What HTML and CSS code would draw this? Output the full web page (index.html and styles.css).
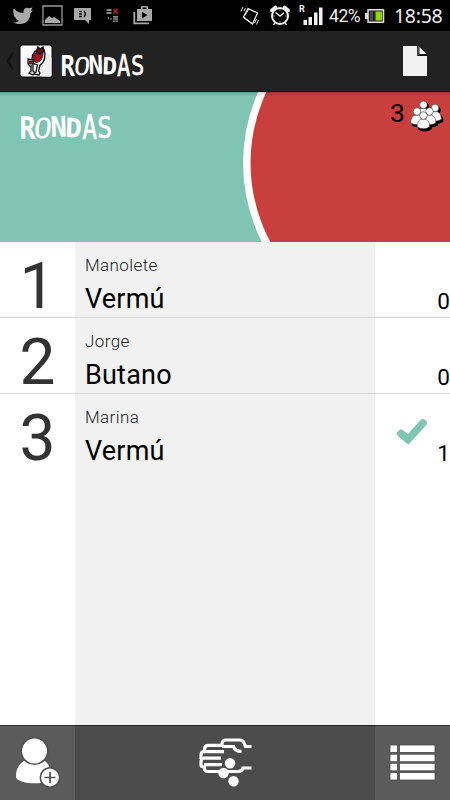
FILE: index.html
```html
<!DOCTYPE html>
<html lang="es">
<head>
    <meta charset="UTF-8">
    <meta name="viewport" content="width=device-width, initial-scale=1.0">
    <title>Rondas</title>
    <link rel="stylesheet" href="styles.css">
</head>
<body>
    <div class="app">
        <div class="status-bar">
            <svg class="status-left" width="160" height="31" viewBox="0 0 160 31" fill="#a9a9a9">
                <path d="M14 8.500C17 12 20 13 23.500 13C23 9 26 6.500 29 8.200L32.500 7.500L31 10.500L33 10.500L30.500 13C30.500 21 23 27 13.500 22.500C16 22.500 18 22 19 20.500C17 20.500 15.500 19 15.500 17.500C13.800 16.500 13.500 15 13.800 13.500C12.800 12 13 10 14 8.500Z"/>
                <path d="M43 6h19v19h-19z" fill="none" stroke="#999" stroke-width="1.300"/>
                <path d="M45 23v-3l4-4 3 2 2-1 6 4v2z"/>
                <path d="M74 8h17v12h-2v4l-4-4H74z"/>
                <path d="M79 11.500h3M79 14h3M79 16.500h3M84 11q2.500 3 0 6" stroke="#111" fill="none" stroke-width="1.500"/>
                <path d="M106.500 9h5v2h-5zM106.500 12h5v2h-5zM108 17h1v2h-1zM110.500 18h1v2h-1zM113 16h5v1.700h-5zM113 18.300h5v1.500h-5zM113 20.500h5v1.300h-5z" fill="#888"/>
                <path d="M113.500 9l4 4.500m0-4.500l-4 4.500" stroke="#b51618" stroke-width="1.500"/>
                <path d="M137 9h4V7q0-1 1-1h5q1 0 1 1v2h4v12h-15zM142.500 7.500V9h4V7.500z" fill-rule="evenodd"/>
                <path d="M142 12l5.500 3-5.500 3.500z" fill="#000"/>
                <path d="M134.300 12v11.300h14.500" fill="none" stroke="#a9a9a9" stroke-width="1.800"/>
            </svg>
            <div class="status-right">
                <svg width="86" height="31" viewBox="238 0 86 31" fill="none" stroke="#eee">
                    <path d="M248 8.500l9.500 4.500-5 11-9-7z" stroke-width="1.300"/>
                    <path d="M245 15.500l4-6.500M244 18l8 5.500" stroke-width=".8"/>
                    <path d="M243 7l-2 4.500M245.500 8l-1.500 3M258.500 20l-2 4.500M256.500 19l-2 4" stroke-width="1"/>
                    <circle cx="280" cy="16" r="8" stroke-width="2"/>
                    <path d="M275.500 12.500l4.500 3.500 4-3.200M273.500 25l1.500-2.500M286.500 25l-1.500-2.500" stroke-width="1.400"/>
                    <path d="M271.500 10.500l4-3.500M288.500 10.500l-4-3.500" stroke-width="3" stroke-linecap="round"/>
                    <path d="M280 9.500v1M280 21.500v1M273.500 16h1M285.500 16h1" stroke-width="1"/>
                    <path d="M303.500 20h3.500v5h-3.500zM308.500 17h3.500v8h-3.500zM314 12.500h3.500V25h-3.500zM319 7.500h3.500V25h-3.500z" fill="#f0f0f0" stroke="none"/>
                    <text class="roaming" x="299" y="12">R</text>
                </svg>
                <span class="battery-level">42%</span>
                <svg class="battery" width="20" height="31" viewBox="0 0 20 31">
                    <path d="M3 9.800h15.500v12.400H3z" fill="#222" stroke="#ddd" stroke-width="1.500"/>
                    <path d="M0 13h3v6H0z" fill="#ddd"/>
                    <path d="M10.500 11.500h6.500v9h-6.500z" fill="#8fd413"/>
                    <path d="M5 11.500h3v9H5z" fill="#484848"/>
                </svg>
                <span class="clock">18:58</span>
            </div>
        </div>

        <header class="action-bar">
            <svg class="back" width="10" height="20" viewBox="0 0 10 20"><path d="M8 1.500L3 10l5 8.500" fill="none" stroke="#141414" stroke-width="2.500"/></svg>
            <svg class="app-icon" width="34" height="34" viewBox="0 0 34 34">
                <rect x=".5" y=".5" width="33" height="33" rx="3" fill="#0b0b0b"/>
                <rect x="1.500" y="1.500" width="31" height="31" rx="2" fill="#fafafa"/>
                <path d="M25 5l7.500 8v19.500H23l-4-5z" fill="#eee"/>
                <g stroke="#111" stroke-width="1.300">
                    <path d="M16 7C12 12 12 19 16 20L18.500 21L17 28L14 30L20 31L21 29L19.500 27L21 21C26 18 27 11 25 6Z" fill="#fff"/>
                    <path d="M15.500 9C13.500 14 14 18 18 18.500C22 18 24.500 13 24 8L20 10Z" fill="#a5141f" stroke-width=".8"/>
                    <path d="M17 8L19 3L21 5L24 3L25 7L21 10Z" fill="#6b1015"/>
                    <path d="M9 15L9 20Q11 23 12 22L12 27L10 29L14 31L16 29L14 27L14 21L15 16Z" fill="#ddd"/>
                    <path d="M10 17h4v3h-4z" fill="#a01b23" stroke-width=".6"/>
                </g>
            </svg>
            <h1 class="logo logo-small"><span class="l-r">R</span><span class="l-o">O</span><span class="l-n">N</span><span class="l-d">D</span><span class="l-a">A</span><span class="l-s">S</span></h1>
            <svg class="new-doc" width="26" height="32" viewBox="0 0 26 32">
                <path d="M1 1h15.500v9H25v21H1z" fill="#f2f2f2"/>
                <path d="M17.500 2l7 7h-7z" fill="#f2f2f2"/>
                <path d="M15.800 1v9.500H25" fill="none" stroke="#111" stroke-width="1.200"/>
            </svg>
        </header>

        <section class="banner">
            <svg class="banner-circle" width="450" height="150" viewBox="0 0 450 150">
                <circle cx="418.500" cy="71" r="171.700" fill="#c93f3d" stroke="#fff" stroke-width="7.500"/>
            </svg>
            <h2 class="logo"><span class="l-r">R</span><span class="l-o">O</span><span class="l-n">N</span><span class="l-d">D</span><span class="l-a">A</span><span class="l-s">S</span></h2>
            <div class="people">
                <span>3</span>
                <svg width="34" height="33" viewBox="0 0 34 33">
                    <defs>
                        <g id="person">
                            <path d="M-6.300 11.500C-6.500 6 -4 3.500 0 3.500S6.500 6 6.300 11.500Q0 15 -6.300 11.500Z"/>
                            <circle r="3.800"/>
                        </g>
                    </defs>
                    <g transform="translate(1.500 1.700)" fill="#000" stroke="#000">
                        <use href="#person" x="13.400" y="6"/><use href="#person" x="25" y="9.500"/><use href="#person" x="7" y="13"/><use href="#person" x="19.500" y="13"/><use href="#person" x="13.400" y="17"/>
                    </g>
                    <g fill="#fff" stroke="#333" stroke-width=".6">
                        <use href="#person" x="13.400" y="5.800"/><use href="#person" x="25" y="9"/><use href="#person" x="7" y="12.500"/><use href="#person" x="19.500" y="12.500"/><use href="#person" x="13.400" y="16.500"/>
                    </g>
                </svg>
            </div>
        </section>

        <main class="rounds">
            <div class="row">
                <div class="number">1</div>
                <div class="person">
                    <div class="name">Manolete</div>
                    <div class="drink">Vermú</div>
                </div>
                <div class="count">0</div>
            </div>
            <div class="row">
                <div class="number">2</div>
                <div class="person">
                    <div class="name">Jorge</div>
                    <div class="drink">Butano</div>
                </div>
                <div class="count">0</div>
            </div>
            <div class="row">
                <div class="number">3</div>
                <div class="person">
                    <div class="name">Marina</div>
                    <div class="drink">Vermú</div>
                </div>
                <div class="count">
                    <svg class="check" width="32" height="30" viewBox="0 0 32 30"><path d="M5 16.500L12 22.500L27 6" fill="none" stroke="#80c4b3" stroke-width="7.600" stroke-linecap="round"/></svg>
                    1
                </div>
            </div>
        </main>

        <nav class="bottom-bar">
            <a class="tab">
                <svg width="75" height="75" viewBox="0 0 75 75">
                    <path d="M24 36C17 41 16 46 16 52C17 60 49 60 51 54C52 47 50 40 45 36Z" fill="#fff"/>
                    <circle cx="34.500" cy="26" r="13.300" fill="#fff" stroke="#505050" stroke-width="1.600"/>
                    <circle cx="50" cy="52.500" r="9.700" fill="#fff" stroke="#505050" stroke-width="1.600"/>
                    <path d="M50 47v11M44.500 52.500h11" stroke="#505050" stroke-width="1.700"/>
                </svg>
            </a>
            <a class="tab tab-main">
                <svg width="60" height="75" viewBox="195 0 60 75">
                    <g fill="none" stroke="#fff" stroke-width="3.200">
                        <path d="M223 20.300H209Q204.500 20.300 204.500 24V26.500Q201 26.500 201 30V33Q201.500 33.300 203 33.500Q201 34 201 37V40Q201 42 204.500 42V44Q204.500 46.500 208 46.500H238Q242 46.500 243 43H251.500"/>
                        <path d="M204 26.700H224M203 33.200H221M204 39.700H222"/>
                        <path d="M222 20.300V19Q222 15 226 15H240Q243 15 244 18L245.500 21.500H251.500"/>
                        <path d="M222 21.500H233.500Q235 26.500 241.500 26.500"/>
                    </g>
                    <g fill="#fff">
                        <circle cx="230" cy="38.300" r="5.200"/>
                        <circle cx="223.500" cy="48" r="5.200"/>
                        <circle cx="233.500" cy="56.300" r="5.200"/>
                    </g>
                </svg>
            </a>
            <a class="tab">
                <svg width="75" height="75" viewBox="0 0 75 75" fill="#fff" stroke="#474747" stroke-width=".8">
                    <path d="M15 20h7.500v7.500H15zM24.500 20H60v7.500H24.500zM15 29.200h7.500v7.500H15zM24.500 29.200H60v7.500H24.500zM15 38.300h7.500v7.500H15zM24.500 38.300H60v7.500H24.500zM15 47.500h7.500V55H15zM24.500 47.500H60V55H24.500z"/>
                </svg>
            </a>
        </nav>
    </div>
</body>
</html>
```

FILE: styles.css
```css
* { box-sizing: border-box; }
body {
    margin: 0;
    font-family: Roboto, "Liberation Sans", sans-serif;
    color: #000;
}
svg { display: block; flex-shrink: 0; }
.app {
    display: flex;
    flex-direction: column;
    width: 450px;
    height: 800px;
    overflow: hidden;
}

.status-bar {
    display: flex;
    justify-content: space-between;
    height: 31px;
    background: #000;
    color: #f0f0f0;
}
.status-right { display: flex; padding-right: 7px; }
.roaming { font: bold 9px Roboto, sans-serif; fill: #eee; stroke: none; }
.battery-level { width: 38px; padding-left: 5px; font-size: 17.500px; line-height: 33px; letter-spacing: -0.4px; }
.battery { margin-left: 3px; }
.clock { width: 49px; margin-left: 9px; font: 19.500px/32px "Noto Sans", sans-serif; letter-spacing: -0.3px; white-space: nowrap; }

.action-bar {
    display: flex;
    align-items: center;
    height: 61px;
    padding: 0 22px 0 5px;
    background: #222;
    border-bottom: 1px solid #101515;
}
.app-icon { margin-left: 4px; }
.new-doc { margin-left: auto; }

/* hand-cut lettering, every letter has its own weight and tilt */
.logo {
    display: flex;
    margin: 0;
    color: #fff;
    font: bold 29px/30px "DejaVu Sans Mono", monospace;
}
.logo span { width: 15.400px; text-align: center; transform-origin: 50% 55%; }
.logo .l-r { transform: scale(0.92, 1.12); }
.logo .l-o { font-weight: normal; transform: skewX(-6deg) scale(1.05, 0.95); }
.logo .l-n { transform: rotate(-2deg) scale(0.94, 0.98) translateY(-1px); }
.logo .l-d { transform: rotate(2deg) scale(0.95, 0.92); }
.logo .l-a { font-weight: normal; -webkit-text-stroke: 0.5px #fff; transform: scale(0.85, 1.15); }
.logo .l-s { font-weight: normal; -webkit-text-stroke: 0.5px #fff; transform: scale(0.85, 1.05); }
.logo-small { margin: 9px 0 0 7px; font-size: 26px; }
.logo-small span { width: 14px; }

.banner {
    position: relative;
    display: flex;
    justify-content: space-between;
    align-items: flex-start;
    height: 150px;
    padding: 20px 6px 0 19px;
    background: #80c4b3;
}
.banner::after {
    content: "";
    position: absolute;
    inset: 0 0 auto;
    height: 4px;
    background: linear-gradient(rgba(0, 0, 0, 0.2), transparent);
}
.banner-circle { position: absolute; left: 0; top: 0; }
.banner .logo { position: relative; margin-top: 1px; }
.people { position: relative; display: flex; gap: 5px; margin-top: -13px; font-size: 26.500px; line-height: 28px; }

.rounds {
    flex: 1;
    background: linear-gradient(90deg, #fff 75px, #f1f1f1 75px, #f1f1f1 375px, #fff 375px);
}
.row {
    display: grid;
    grid-template-columns: 75px 300px 75px;
    height: 76px;
    border-bottom: 1px solid #d6d6d6;
}
.row:last-child { border-bottom: none; }
.row + .row { height: 76.300px; }
.number { padding-top: 7px; color: #333; font-size: 64px; line-height: 75px; text-align: center; }
.person { padding: 12px 0 0 10px; }
.name { color: #222; font-size: 17px; font-weight: 300; line-height: 22px; letter-spacing: 0.4px; }
.drink { margin-top: 7px; font-size: 27px; line-height: 32px; letter-spacing: 0.2px; }
.count { position: relative; padding-top: 45px; font-size: 22.500px; line-height: 28px; text-align: right; }
.check { position: absolute; left: 21px; top: 23px; }

.bottom-bar {
    display: grid;
    grid-template-columns: 75px 300px 75px;
    height: 75px;
    background: #5b5b5b;
    box-shadow: inset 0 1px #303030;
}
.tab-main { display: flex; justify-content: center; background: #4c4c4c; box-shadow: inset 0 1px #222; }
```
